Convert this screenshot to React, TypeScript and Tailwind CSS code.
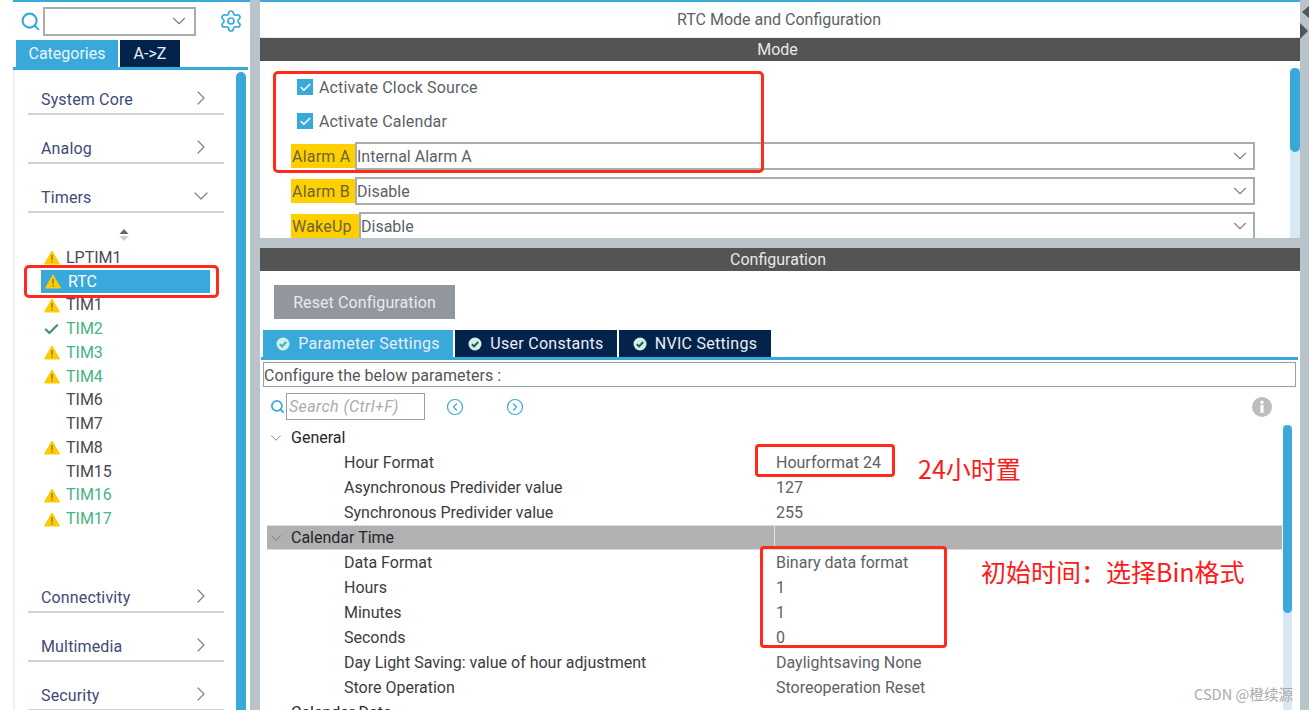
import { Check, ChevronDown, ChevronRight, CircleChevronLeft, CircleChevronRight, Search, Settings } from "lucide-react";

const timers = [
  { name: "LPTIM1", icon: "warn", color: "text-[#4a4a55]" },
  { name: "RTC", icon: "warn", color: "text-white", selected: true },
  { name: "TIM1", icon: "warn", color: "text-[#4a4a55]" },
  { name: "TIM2", icon: "check", color: "text-[#45b583]" },
  { name: "TIM3", icon: "warn", color: "text-[#45b583]" },
  { name: "TIM4", icon: "warn", color: "text-[#45b583]" },
  { name: "TIM6", icon: "", color: "text-[#4a4a55]" },
  { name: "TIM7", icon: "", color: "text-[#4a4a55]" },
  { name: "TIM8", icon: "warn", color: "text-[#4a4a55]" },
  { name: "TIM15", icon: "", color: "text-[#4a4a55]" },
  { name: "TIM16", icon: "warn", color: "text-[#45b583]" },
  { name: "TIM17", icon: "warn", color: "text-[#45b583]" },
];

const WarnIcon = () => (
  <svg width="16" height="15" viewBox="0 0 16 15" className="shrink-0">
    <path d="M8 1 L15.5 14 L0.5 14 Z" fill="#ffcc00" stroke="#ffcc00" strokeLinejoin="round" />
    <rect x="7.3" y="5" width="1.4" height="5" fill="#8a7a20" />
    <rect x="7.3" y="11" width="1.4" height="1.4" fill="#8a7a20" />
  </svg>
);

const Category = ({ label, open }: { label: string; open?: boolean }) => (
  <div className="mb-[10px] flex h-[39px] shrink-0 items-center justify-between border-b-2 border-[#ccd3d9] pl-[13px] pr-[11px] pt-[6px]">
    <span className="pt-[4px] text-[16px] tracking-[0.15px] text-[#3f4a78]">{label}</span>
    {open ? (
      <ChevronDown size={24} strokeWidth={1.2} className="text-[#808080]" />
    ) : (
      <ChevronRight size={24} strokeWidth={1.2} className="text-[#808080]" />
    )}
  </div>
);

const Sidebar = () => (
  <div className="flex w-[250px] shrink-0 flex-col pl-[13px]">
    <div className="h-[2px] shrink-0 bg-[#39a9dc]" />
    <div className="flex h-[38px] shrink-0 items-center">
      <Search size={21} strokeWidth={2.4} className="ml-[7px] text-[#39a9dc]" />
      <div className="ml-[2px] flex h-[29px] w-[153px] items-center justify-end border-2 border-[#a9adb0] pr-[4px]">
        <ChevronDown size={22} strokeWidth={1.2} className="text-[#808080]" />
      </div>
      <Settings size={24} strokeWidth={1.7} className="ml-[23px] text-[#39a9dc]" />
    </div>
    <div className="flex h-[27px] shrink-0 gap-[2px] pl-[3px]">
      <div className="flex w-[102px] items-center justify-center bg-[#39a9dc] text-[16px] text-[#e8f6fc]">Categories</div>
      <div className="flex w-[60px] items-center justify-center bg-[#03234b] text-[16px] text-[#e8eef4]">A-&gt;Z</div>
    </div>
    <div className="h-[3px] w-[235px] shrink-0 bg-[#39a9dc]" />
    <div className="flex min-h-0 flex-1 border-l-2 border-[#eef0f2] pr-[4px]">
      <div className="flex w-[221px] flex-col overflow-hidden pl-[13px] pr-[12px] pt-[6px]">
        <Category label="System Core" />
        <Category label="Analog" />
        <Category label="Timers" open />
        <div className="flex h-[351px] shrink-0 flex-col">
          <svg width="12" height="14" viewBox="0 0 12 14" className="ml-[90px] mt-[5px] shrink-0">
            <path d="M6 1 L10.5 6 L1.5 6 Z" fill="#666" />
            <path d="M6 13 L10.5 8 L1.5 8 Z" fill="#ccc" />
          </svg>
          <div className="ml-[13px] mt-[4px] flex w-[169px] flex-col">
            {timers.map((t) => (
              <div key={t.name} className={`flex h-[23.75px] shrink-0 items-center text-[16px] ${t.color}`}>
                <div className={`flex h-[23px] w-full items-center ${t.selected ? "bg-[#39a9dc]" : ""}`}>
                  <div className={`flex shrink-0 items-center ${t.selected ? "w-[27px] pl-[4px]" : "w-[25px] pl-[3px]"}`}>
                    {t.icon === "warn" && <WarnIcon />}
                    {t.icon === "check" && <Check size={17} strokeWidth={3.2} className="-ml-[1px] text-[#3a9a6a]" />}
                  </div>
                  <span>{t.name}</span>
                </div>
              </div>
            ))}
          </div>
        </div>
        <Category label="Connectivity" />
        <Category label="Multimedia" />
        <Category label="Security" />
      </div>
      <div className="mt-[2px] w-[10px] rounded-t-[5px] bg-[#39a9dc]" />
    </div>
  </div>
);

const ActivateRow = ({ label }: { label: string }) => (
  <div className="flex h-[34px] items-center gap-[6px] pl-[6px]">
    <div className="flex h-[16px] w-[16px] items-center justify-center bg-[#39a9dc]">
      <Check size={13} strokeWidth={3} className="text-white" />
    </div>
    <span className="pt-[2px] text-[16px] tracking-[0.15px] text-[#5d6168]">{label}</span>
  </div>
);

const ModeSelect = ({ label, value, wide }: { label: string; value: string; wide?: boolean }) => (
  <div className="flex h-[35px] shrink-0 items-center">
    <div className={`flex h-[24px] items-center bg-[#ffd000] pl-[1px] pt-[2px] text-[16px] tracking-[0.2px] text-[#6e6330] ${wide ? "w-[68px]" : "w-[64px]"}`}>{label}</div>
    <div className="flex h-[28px] flex-1 items-center justify-between border-2 border-[#a9adb0] pr-[2px] text-[16px] text-[#5d6168]">
      <span className="pt-[2px]">{value}</span>
      <ChevronDown size={22} strokeWidth={1.2} className="text-[#808080]" />
    </div>
  </div>
);

const ConfigRow = ({ label, value }: { label: string; value: string }) => (
  <div className="flex h-[25px] shrink-0 items-center text-[16px]">
    <span className="w-[509px] shrink-0 pl-[77px] text-[#3c3c42]">{label}</span>
    <span className="text-[#5d6168]">{value}</span>
  </div>
);

const ConfigGroup = ({ label, shaded }: { label: string; shaded?: boolean }) => (
  <div className={`flex h-[25px] shrink-0 items-center text-[16px] text-[#26262c] ${shaded ? "border-y border-[#dcdcdc] bg-[#b1b1b1]" : ""}`}>
    <ChevronDown size={18} strokeWidth={1} className="text-[#666]" />
    <span className="ml-[6px] w-[483px]">{label}</span>
    {shaded && <div className="h-full w-px bg-[#e4e4e4]" />}
  </div>
);

const Tab = ({ label, active, width }: { label: string; active?: boolean; width: string }) => (
  <div className={`flex h-[27px] items-center justify-center gap-[8px] text-[16px] tracking-[0.28px] text-[#e8eef4] ${width} ${active ? "bg-[#39a9dc]" : "bg-[#03234b]"}`}>
    <svg width="14" height="14" viewBox="0 0 14 14">
      <circle cx="7" cy="7" r="6.5" fill="#d4f0e4" />
      <path d="M3.8 7.2 L6.1 9.4 L10.2 5" fill="none" stroke={active ? "#39a9dc" : "#1c5a5a"} strokeWidth="2" />
    </svg>
    <span>{label}</span>
  </div>
);

const MainPanel = () => (
  <div className="flex min-w-0 flex-1 flex-col bg-white">
    <div className="h-[2px] shrink-0 bg-[#39a9dc]" />
    <div className="flex h-[35px] shrink-0 items-center justify-center pr-[2px] text-[16px] text-[#5d6168]">RTC Mode and Configuration</div>
    <div className="h-px shrink-0 bg-[#e6e6e6]" />
    <div className="flex h-[23px] shrink-0 items-center justify-center bg-[#535453] pr-[5px] text-[16px] text-[#e8e8e8]">Mode</div>
    <div className="flex h-[177px] shrink-0 overflow-hidden">
      <div className="flex min-w-0 flex-1 flex-col overflow-hidden pl-[31px] pt-[9px]">
        <div className="flex flex-col">
          <ActivateRow label="Activate Clock Source" />
          <ActivateRow label="Activate Calendar" />
        </div>
        <ModeSelect label="Alarm A" value="Internal Alarm A" />
        <ModeSelect label="Alarm B" value="Disable" />
        <ModeSelect label="WakeUp" value="Disable" wide />
      </div>
      <div className="ml-[35px] mt-[7px] w-[10px] bg-[#d9e8f5]">
        <div className="h-[84px] rounded-[5px] bg-[#39a9dc]" />
      </div>
    </div>
    <div className="h-[10px] shrink-0 bg-[#b8c3ca]" />
    <div className="flex h-[23px] shrink-0 items-center justify-center bg-[#535453] pr-[4px] pt-[1px] text-[16px] text-[#e8e8e8]">Configuration</div>
    <div className="shrink-0 pl-[14px] pt-[14px]">
      <div className="flex h-[34px] w-[181px] items-center justify-center bg-[#91979d] pt-[1px] text-[16px] tracking-[0.1px] text-[#e8eaec]">Reset Configuration</div>
    </div>
    <div className="mt-[11px] flex shrink-0 gap-[2px] pl-[3px]">
      <Tab label="Parameter Settings" active width="w-[190px]" />
      <Tab label="User Constants" width="w-[162px]" />
      <Tab label="NVIC Settings" width="w-[152px]" />
    </div>
    <div className="ml-[1px] mr-[2px] h-[3px] shrink-0 bg-[#39a9dc]" />
    <div className="ml-[3px] mr-[4px] mt-[2px] flex h-[25px] shrink-0 items-center border border-[#9aa0a4] pt-[2px] text-[16px] tracking-[0.05px] text-[#55555c]">Configure the below parameters :</div>
    <div className="mt-[6px] flex h-[27px] shrink-0 items-center pl-[10px]">
      <Search size={15} strokeWidth={2.8} className="text-[#39a9dc]" />
      <div className="ml-[1px] flex h-[27px] w-[139px] items-center border border-[#9aa0a4] pl-[2px] text-[16px] italic tracking-[0.4px] text-[#a9adb2]">Search (Ctrl+F)</div>
      <CircleChevronLeft size={18} strokeWidth={1.6} className="ml-[21px] text-[#39a9dc]" />
      <CircleChevronRight size={18} strokeWidth={1.6} className="ml-[42px] text-[#39a9dc]" />
      <svg width="20" height="20" viewBox="0 0 20 20" className="ml-[728px]">
        <circle cx="10" cy="10" r="10" fill="#bdbdbd" />
        <rect x="8.5" y="8" width="3" height="8" fill="#fff" />
        <circle cx="10" cy="5.3" r="1.7" fill="#fff" />
      </svg>
    </div>
    <div className="flex min-h-0 flex-1">
      <div className="flex w-[1022px] flex-col overflow-hidden pl-[7px] pt-[5px]">
        <ConfigGroup label="General" />
        <ConfigRow label="Hour Format" value="Hourformat 24" />
        <ConfigRow label="Asynchronous Predivider value" value="127" />
        <ConfigRow label="Synchronous Predivider value" value="255" />
        <ConfigGroup label="Calendar Time" shaded />
        <ConfigRow label="Data Format" value="Binary data format" />
        <ConfigRow label="Hours" value="1" />
        <ConfigRow label="Minutes" value="1" />
        <ConfigRow label="Seconds" value="0" />
        <ConfigRow label="Day Light Saving: value of hour adjustment" value="Daylightsaving None" />
        <ConfigRow label="Store Operation" value="Storeoperation Reset" />
        <ConfigGroup label="Calendar Date" />
      </div>
      <div className="ml-[1px] mt-[5px] w-[9px] bg-[#d9e8f5]">
        <div className="h-[188px] rounded-[5px] bg-[#39a9dc]" />
      </div>
    </div>
  </div>
);

const App = () => (
  <div className="relative flex h-[710px] w-[1309px] overflow-hidden bg-white font-['Roboto',sans-serif]">
    <Sidebar />
    <div className="w-[10px] shrink-0 bg-[#b8c3ca]" />
    <MainPanel />
    <div className="relative w-[9px] shrink-0 bg-[#b8c3ca]">
      <svg width="9" height="36" viewBox="0 0 9 36" className="absolute left-0 top-[5px]">
        <path d="M9 1 L2 7 L9 13 Z" fill="#555" />
        <path d="M0 18 L8 26 L0 34 Z" fill="#555" />
      </svg>
    </div>

    {/* red markup drawn over the screenshot */}
    <div className="absolute left-[24px] top-[265px] h-[33px] w-[195px] rounded-[5px] border-[3px] border-[#ff2a1a]" />
    <div className="absolute left-[273px] top-[71px] h-[102px] w-[491px] rounded-[5px] border-[3px] border-[#ff2a1a]" />
    <div className="absolute left-[755px] top-[444px] h-[33px] w-[140px] rounded-[4px] border-[3px] border-[#ff2a1a]" />
    <div className="absolute left-[760px] top-[546px] h-[102px] w-[187px] rounded-[4px] border-[3px] border-[#ff2a1a]" />
    <div className="absolute left-[918px] top-[450px] whitespace-nowrap font-['Noto_Sans_CJK_SC',sans-serif] text-[25px] leading-[36px] text-[#ff1a1a]">24小时置</div>
    <div className="absolute left-[981px] top-[553px] whitespace-nowrap font-['Noto_Sans_CJK_SC',sans-serif] text-[25px] leading-[36px] text-[#ff1a1a]">初始时间：选择Bin格式</div>
    <div className="absolute left-[1194px] top-[685px] whitespace-nowrap font-['Noto_Sans_CJK_SC',sans-serif] text-[14.6px] leading-[18px] text-[#aaaaaa]">CSDN @橙续源</div>
  </div>
);

export default App;
